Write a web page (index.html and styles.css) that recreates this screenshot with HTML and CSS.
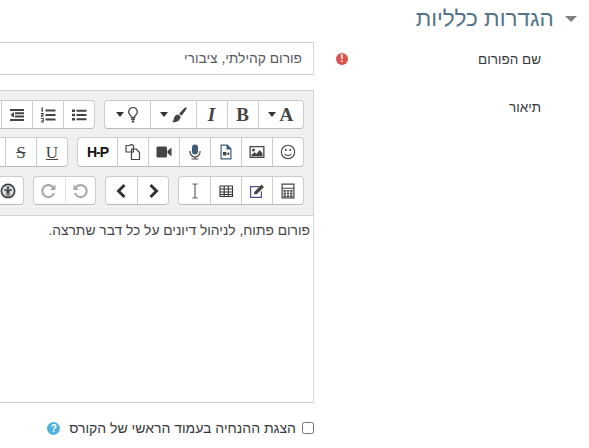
FILE: index.html
```html
<!DOCTYPE html>
<html lang="he" dir="rtl">
<head>
    <meta charset="UTF-8">
    <meta name="viewport" content="width=device-width, initial-scale=1.0">
    <title>הגדרות כלליות</title>
    <link rel="stylesheet" href="styles.css">
</head>
<body>
    <h3 class="section-title">
        <span class="caret-big"></span>
        הגדרות כלליות
    </h3>

    <div class="form-row row-name">
        <div class="label-col">
            <label for="forumName">שם הפורום</label>
            <span class="required-icon">!</span>
        </div>
        <div class="field-col">
            <input type="text" id="forumName" class="text-input" value="פורום קהילתי, ציבורי">
        </div>
    </div>

    <div class="form-row">
        <div class="label-col label-desc">
            <label>תיאור</label>
        </div>
        <div class="field-col">
            <div class="editor">
                <div class="toolbar">
                    <div class="tb-row">
                        <div class="tb-group">
                            <button class="tb-btn wide"><span class="caret"></span><span class="glyph serif bold big">A</span></button>
                            <button class="tb-btn"><span class="glyph serif bold big">B</span></button>
                            <button class="tb-btn"><span class="glyph serif bold italic big">I</span></button>
                            <button class="tb-btn wide">
                                <span class="caret"></span>
                                <svg viewBox="0 0 16 16" class="icon"><path d="M15.500.5c.6.6-.2 2-1.400 3.500L10.500 8.800 8 6.800l4.200-4.500C13.700.8 15 0 15.500.5zM7.200 7.600l2.400 2C9.500 13 6.500 16 1 15c1.800-1 1.500-3 2.300-4.800.7-1.500 2.400-2.600 3.900-2.600z"/></svg>
                            </button>
                            <button class="tb-btn wide">
                                <span class="caret"></span>
                                <svg viewBox="0 0 12 18" class="icon-tall"><path d="M6 1.500a4.300 4.300 0 0 0-2.500 7.800c.6.500.8 1.200.8 2h3.400c0-.8.200-1.500.8-2A4.300 4.300 0 0 0 6 1.500z" fill="#fff" stroke="#444" stroke-width="1.200"/><path d="M4.200 12.200h3.600v1.700H4.200zM4.800 14.500h2.400v2H4.800z"/></svg>
                            </button>
                        </div>
                        <div class="tb-group">
                            <button class="tb-btn">
                                <svg viewBox="0 0 16 16" class="icon"><path d="M1 2.500h3v2.600H1zM1 6.700h3v2.600H1zM1 10.900h3v2.600H1zM5.500 2.800h10v2H5.500zM5.500 7h10v2H5.500zM5.500 11.200h10v2H5.500z"/></svg>
                            </button>
                            <button class="tb-btn">
                                <svg viewBox="0 0 16 16" class="icon"><path d="M5.500 2.500h10v2h-10zM5.500 7h10v2h-10zM5.500 11.500h10v2h-10z"/><path d="M1.500.5h1.400v4.200H1.500zM.8 6h3v1.200L2.300 8.800h1.500v1H.8v-1l1.700-1.800H.8zM.8 11h3v4.500h-3v-.9h2v-.9H1.400v-.8h1.400v-1H.8z"/></svg>
                            </button>
                            <button class="tb-btn">
                                <svg viewBox="0 0 16 16" class="icon"><path d="M1 2h14v2H1zM6 5.200h9v2H6zM6 8.600h9v2H6zM1 12h14v2H1zM5 5v5.800L1.500 8z"/></svg>
                            </button>
                            <button class="tb-btn"></button>
                        </div>
                    </div>

                    <div class="tb-row row-tall">
                        <div class="tb-group">
                            <button class="tb-btn">
                                <svg viewBox="0 0 16 16" class="icon"><circle cx="8" cy="8" r="6.700" fill="none" stroke="#444" stroke-width="1.100"/><circle cx="5.700" cy="6" r="1"/><circle cx="10.300" cy="6" r="1"/><path d="M4.500 9.800c1.700 2.400 5.300 2.400 7 0" fill="none" stroke="#444" stroke-width="1.100"/></svg>
                            </button>
                            <button class="tb-btn">
                                <svg viewBox="0 0 16 16" class="icon"><path d="M.5 2h15v12H.5zM1.800 3.300v9.400h12.400V3.300z" fill-rule="evenodd"/><circle cx="4.500" cy="6" r="1.500"/><path d="M2.500 12.300v-1.500l3-2.500 2 1.500 3.200-3.800 2.800 3.300v3z"/></svg>
                            </button>
                            <button class="tb-btn">
                                <svg viewBox="0 0 16 16" class="icon"><path d="M2.500.5h7L13.500 4.500V15.500h-11zM3.700 1.700v12.600h8.600V5.500H8.500V1.700z" fill-rule="evenodd" fill="#3d5a78"/><path d="M5 8h3.400v3.500H5zM8.800 9.500l2.400-1.500v3.500l-2.400-1.500z"/></svg>
                            </button>
                            <button class="tb-btn">
                                <svg viewBox="0 0 16 16" class="icon"><rect x="5" y=".5" width="6" height="10" rx="3" fill="#3d5a78"/><path d="M3 7v1a5 5 0 0 0 10 0V7" fill="none" stroke="#444" stroke-width="1.200"/><path d="M7.400 13h1.200v1.500H11.500v1h-7v-1h2.900z"/></svg>
                            </button>
                            <button class="tb-btn">
                                <svg viewBox="0 0 16 16" class="icon"><rect x=".5" y="2.500" width="10.500" height="11" rx="1.500"/><path d="M11.500 7l4-3.500v9l-4-3.500z"/></svg>
                            </button>
                            <button class="tb-btn">
                                <svg viewBox="0 0 16 16" class="icon"><path d="M1 1.500h3.500l1.500-1h1l1.500 1.500v6H1zM6.500 5h4.500l3.500 3.500v7h-8z" fill="#fff" stroke="#444" stroke-width="1.200" stroke-linejoin="round"/></svg>
                            </button>
                            <button class="tb-btn h5p"><span class="h5p-label">H-P</span></button>
                        </div>
                        <div class="tb-group">
                            <button class="tb-btn"><span class="glyph serif under">U</span></button>
                            <button class="tb-btn"><span class="glyph serif strike">S</span></button>
                            <button class="tb-btn"></button>
                        </div>
                    </div>

                    <div class="tb-row">
                        <div class="tb-group">
                            <button class="tb-btn">
                                <svg viewBox="0 0 16 16" class="icon"><path d="M1.500.5h13v15h-13zM2.700 1.700v3h10.600v-3zM2.700 5.800v8.500h10.600V5.800z" fill-rule="evenodd"/><path d="M3.500 7h2.400v1.800H3.500zM6.800 7h2.400v1.800H6.800zM10.100 7h2.400v1.800h-2.400zM3.500 9.600h2.400v1.800H3.500zM6.800 9.600h2.400v1.800H6.800zM10.100 9.600h2.400v1.800h-2.400zM3.500 12.200h2.400V14H3.500zM6.800 12.200h2.400V14H6.800zM10.100 12.200h2.400V14h-2.400z"/></svg>
                            </button>
                            <button class="tb-btn">
                                <svg viewBox="0 0 16 16" class="icon"><path d="M1 3h10l-1.200 1.200H2.200v9.600h9.600V9L13 7.800V15H1z" fill="#5c4a8a"/><path d="M5.500 8.800L12.500 1.500l2.500 2.500L8 11l-3 .5z"/></svg>
                            </button>
                            <button class="tb-btn">
                                <svg viewBox="0 0 16 16" class="icon"><path d="M2 3h12.500v10.500H2z M2 6h12.500M2 9h12.500M2 11.500h12.500M6.200 3v10.500M10.300 3v10.500" fill="none" stroke="#333" stroke-width="1.100"/></svg>
                            </button>
                            <button class="tb-btn">
                                <svg viewBox="0 0 16 16" class="icon"><path d="M5.500 1h2l.5.600.5-.6h2M5.500 15h2l.5-.6.5.6h2M8 1.500v13" fill="none" stroke="#444" stroke-width="1"/></svg>
                            </button>
                        </div>
                        <div class="tb-group">
                            <button class="tb-btn">
                                <svg viewBox="0 0 16 16" class="icon"><path d="M5.500 2L11.500 8l-6 6" fill="none" stroke="#333" stroke-width="3"/></svg>
                            </button>
                            <button class="tb-btn">
                                <svg viewBox="0 0 16 16" class="icon"><path d="M10.500 2L4.500 8l6 6" fill="none" stroke="#333" stroke-width="3"/></svg>
                            </button>
                        </div>
                        <div class="tb-group">
                            <button class="tb-btn muted">
                                <svg viewBox="0 0 16 16" class="icon"><path d="M3.500 5A6 6 0 1 1 3 10" fill="none" stroke="#aaa" stroke-width="2.200"/><path d="M1.500 1.500v5.500H7z" fill="#aaa"/></svg>
                            </button>
                            <button class="tb-btn muted">
                                <svg viewBox="0 0 16 16" class="icon"><path d="M12.500 5A6 6 0 1 0 13 10" fill="none" stroke="#aaa" stroke-width="2.200"/><path d="M14.500 1.500v5.500H9z" fill="#aaa"/></svg>
                            </button>
                        </div>
                        <div class="tb-group">
                            <button class="tb-btn">
                                <svg viewBox="0 0 16 16" class="icon"><circle cx="8" cy="8" r="7.500"/><circle cx="8" cy="8" r="5.800" fill="#d5dde4"/><circle cx="8" cy="4.800" r="1.300"/><path d="M4.300 6.300h7.400v1.400H9.500V13.500H8.500v-3h-1v3h-1V7.700H4.300z"/></svg>
                            </button>
                        </div>
                    </div>
                </div>
                <div class="editor-content">פורום פתוח, לניהול דיונים על כל דבר שתרצה.</div>
            </div>
        </div>
    </div>

    <div class="form-row row-check">
        <div class="label-col"></div>
        <div class="field-col check-line">
            <input type="checkbox" id="showIntro" class="check">
            <label for="showIntro">הצגת ההנחיה בעמוד הראשי של הקורס</label>
            <span class="help-icon">?</span>
        </div>
    </div>
</body>
</html>
```

FILE: styles.css
```css
html, body {
    overflow: hidden;
}

body {
    margin: 0;
    height: 448px;
    background-color: #fff;
    color: #373a3c;
    font-family: "Liberation Sans", "DejaVu Sans", sans-serif;
    font-size: 13.5px;
}

.section-title {
    margin: 0;
    padding: 6px 12px 0 0;
    height: 36px;
    box-sizing: border-box;
    font-size: 22.5px;
    font-weight: normal;
    line-height: 26px;
    color: #55748b;
}

.caret-big {
    display: inline-block;
    margin-left: 5px;
    vertical-align: 4px;
    border-top: 6px solid #7f7f7f;
    border-left: 6px solid transparent;
    border-right: 6px solid transparent;
}

.form-row {
    display: grid;
    grid-template-columns: 275px 400px;
}

.row-name {
    margin-top: 6px;
    margin-bottom: 15px;
}

.label-col {
    display: flex;
    justify-content: space-between;
    align-items: flex-start;
    padding: 10px 48px 0 22px;
}

.required-icon {
    width: 12px;
    height: 12px;
    margin-top: 1px;
    border-radius: 50%;
    background-color: #d9534f;
    color: #fff;
    font-size: 10px;
    font-weight: bold;
    line-height: 12px;
    text-align: center;
}

.text-input {
    display: block;
    width: 100%;
    height: 33px;
    box-sizing: border-box;
    padding: 0 11px;
    border: 1px solid #ced4da;
    color: #55595c;
    font-family: inherit;
    font-size: 13.8px;
}

.editor {
    height: 313px;
    box-sizing: border-box;
    border: 1px solid #ced4da;
}

.toolbar {
    height: 125px;
    box-sizing: border-box;
    padding: 9px 9px 0 0;
    background-color: #f0f0f0;
    border-bottom: 1px solid #ced4da;
}

.tb-row {
    display: flex;
    gap: 9px;
    height: 29px;
    margin-bottom: 8px;
}

.row-tall {
    height: 30px;
    margin-bottom: 9px;
}

.tb-group {
    display: flex;
    flex-shrink: 0;
    background-color: #fff;
    border: 1px solid #ccc;
    border-bottom-color: #bbb;
    border-radius: 4px;
}

.tb-btn {
    display: flex;
    align-items: center;
    justify-content: center;
    gap: 3px;
    width: 31px;
    padding: 0;
    border: 0;
    border-left: 1px solid #ccc;
    background: none;
    color: #444;
}

.tb-btn:last-child {
    border-left: 0;
}

.tb-btn.wide {
    width: 45.5px;
    flex-direction: row-reverse;
}

.tb-btn.h5p {
    width: 39px;
}

.tb-btn.muted {
    width: 30.5px;
    border-left-color: #e4e4e4;
}

.icon {
    width: 16px;
    height: 16px;
    fill: #444;
}

.icon-tall {
    width: 12px;
    height: 18px;
    fill: #444;
}

.caret {
    border-top: 5px solid #333;
    border-left: 4.5px solid transparent;
    border-right: 4.5px solid transparent;
}

.glyph {
    color: #444;
    line-height: 1;
}

.serif {
    font-family: "Liberation Serif", serif;
    font-size: 17px;
}

.big {
    font-size: 19px;
}

.bold {
    font-weight: bold;
}

.italic {
    font-style: italic;
}

.under {
    text-decoration: underline;
}

.strike {
    text-decoration: line-through;
}

.h5p-label {
    direction: ltr;
    color: #111;
    font-family: "Liberation Sans", sans-serif;
    font-size: 14px;
    font-weight: bold;
    letter-spacing: -1px;
}

.editor-content {
    padding: 7px 3px 0 0;
    color: #444;
    font-size: 13.8px;
}

.row-check {
    margin-top: 17px;
}

.check-line {
    display: flex;
    align-items: center;
    gap: 6px;
    font-size: 14px;
}

.check {
    width: 12px;
    height: 12px;
    margin: 0;
}

.help-icon {
    width: 13px;
    height: 13px;
    margin-right: 3px;
    border-radius: 50%;
    background-color: #4fb3dc;
    color: #fff;
    font-size: 10px;
    font-weight: bold;
    line-height: 13px;
    text-align: center;
}
```
